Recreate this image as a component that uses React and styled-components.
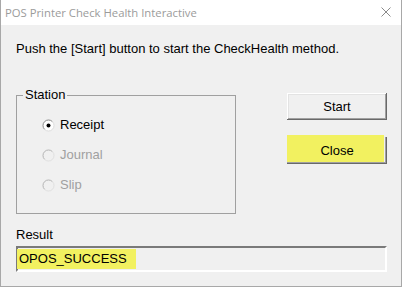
import React from "react";
import styled, { createGlobalStyle } from "styled-components";

const Global = createGlobalStyle`
  html, body { margin: 0; padding: 0; background: #ffffff; }
  #root { width: 402px; height: 287px; }
`;

const Window = styled.div`
  width: 402px;
  height: 287px;
  box-sizing: border-box;
  border: 1px solid #a8a8a8;
  border-top: none;
  display: flex;
  flex-direction: column;
  background: #f0f0f0;
  font-family: "Liberation Sans", Arial, sans-serif;
  font-size: 13px;
  color: #000;
`;

const TitleBar = styled.div`
  flex: none;
  height: 25px;
  background: #ffffff;
  display: flex;
  align-items: center;
  justify-content: space-between;
  padding: 0 10px 0 4px;
`;

const Title = styled.span`
  font-family: "Open Sans", "Noto Sans", sans-serif;
  font-size: 11.3px;
  color: #9b9b9b;
  line-height: 16px;
`;

const CloseIcon = styled.svg`
  display: block;
  width: 10px;
  height: 10px;
  margin-bottom: 1px;
`;

const Body = styled.div`
  flex: 1;
  display: flex;
  flex-direction: column;
  padding: 17px 14px 0 15px;
`;

const Instruction = styled.div`
  line-height: 14px;
  height: 14px;
  white-space: nowrap;
`;

const MainRow = styled.div`
  display: flex;
  justify-content: space-between;
  align-items: flex-start;
  margin-top: 32px;
`;

const GroupBox = styled.fieldset`
  box-sizing: border-box;
  width: 220px;
  height: 126px;
  margin: 0;
  padding: 0 0 0 25px;
  border: 1px solid #a0a0a0;
  min-width: 0;
`;

const Legend = styled.legend`
  margin-left: -19px;
  padding: 0 2px;
  line-height: 14px;
  font-size: 13px;
`;

const RadioList = styled.div`
  display: flex;
  flex-direction: column;
  gap: 16px;
  padding-top: 16px;
`;

const RadioRow = styled.div`
  display: flex;
  align-items: center;
  gap: 5px;
  height: 14px;
  line-height: 14px;
  color: ${(p) => (p.$disabled ? "#a0a0a0" : "#000")};
`;

const RadioDot = styled.svg`
  display: block;
  width: 13px;
  height: 13px;
  flex: none;
`;

const ButtonColumn = styled.div`
  display: flex;
  flex-direction: column;
  gap: 17px;
  margin-top: 5px;
`;

const Button = styled.button`
  position: relative;
  box-sizing: border-box;
  width: 100px;
  height: 27px;
  padding: 0;
  border: none;
  font-family: "Liberation Sans", Arial, sans-serif;
  font-size: 13px;
  color: #000;
  background: #f0f0f0;
  box-shadow: ${(p) =>
    p.$highlight
      ? "inset -1px -1px #696969, inset -2px -2px #a0a0a0"
      : "inset -1px -1px #696969, inset 1px 1px #ffffff, inset -2px -2px #a0a0a0, inset 2px 2px #e3e3e3"};
  &::before {
    content: "";
    display: ${(p) => (p.$highlight ? "block" : "none")};
    position: absolute;
    left: 0;
    top: -2px;
    right: 3px;
    bottom: 2px;
    background: #f2f160;
  }
`;

const ButtonLabel = styled.span`
  position: relative;
`;

const ResultLabel = styled.div`
  margin-top: 14px;
  line-height: 14px;
  height: 14px;
`;

const ResultField = styled.div`
  box-sizing: border-box;
  margin-top: 4px;
  height: 26px;
  background: #f0f0f0;
  border-style: solid;
  border-width: 2px;
  border-color: #7a7a7a #ffffff #ffffff #7a7a7a;
  display: flex;
  align-items: center;
`;

const Highlight = styled.span`
  margin-left: -1px;
  padding: 0 9px 0 2px;
  line-height: 20px;
  background: #f2f160;
`;

function Radio({ checked, disabled }) {
  return (
    <RadioDot viewBox="0 0 13 13">
      <circle cx="6.5" cy="6.5" r="5.5" fill={disabled ? "#f0f0f0" : "#ffffff"} />
      <path d="M2.6 10.4 A5.5 5.5 0 0 1 10.4 2.6" fill="none" stroke={disabled ? "#b4b4b4" : "#8a8a8a"} strokeWidth="1" />
      <path d="M10.4 2.6 A5.5 5.5 0 0 1 2.6 10.4" fill="none" stroke={disabled ? "#e0e0e0" : "#dcdcdc"} strokeWidth="1" />
      {checked && <circle cx="6.5" cy="6.5" r="2" fill="#000" />}
    </RadioDot>
  );
}

export default function App() {
  return (
    <>
      <Global />
      <Window>
        <TitleBar>
          <Title>POS Printer Check Health Interactive</Title>
          <CloseIcon viewBox="0 0 10 10">
            <path d="M0.5 0.5 L9.5 9.5 M9.5 0.5 L0.5 9.5" stroke="#8a8a8a" strokeWidth="1" />
          </CloseIcon>
        </TitleBar>
        <Body>
          <Instruction>Push the [Start] button to start the CheckHealth method.</Instruction>
          <MainRow>
            <GroupBox>
              <Legend>Station</Legend>
              <RadioList>
                <RadioRow>
                  <Radio checked />
                  Receipt
                </RadioRow>
                <RadioRow $disabled>
                  <Radio disabled />
                  Journal
                </RadioRow>
                <RadioRow $disabled>
                  <Radio disabled />
                  Slip
                </RadioRow>
              </RadioList>
            </GroupBox>
            <ButtonColumn>
              <Button>
                <ButtonLabel>Start</ButtonLabel>
              </Button>
              <Button $highlight>
                <ButtonLabel>Close</ButtonLabel>
              </Button>
            </ButtonColumn>
          </MainRow>
          <ResultLabel>Result</ResultLabel>
          <ResultField>
            <Highlight>OPOS_SUCCESS</Highlight>
          </ResultField>
        </Body>
      </Window>
    </>
  );
}
